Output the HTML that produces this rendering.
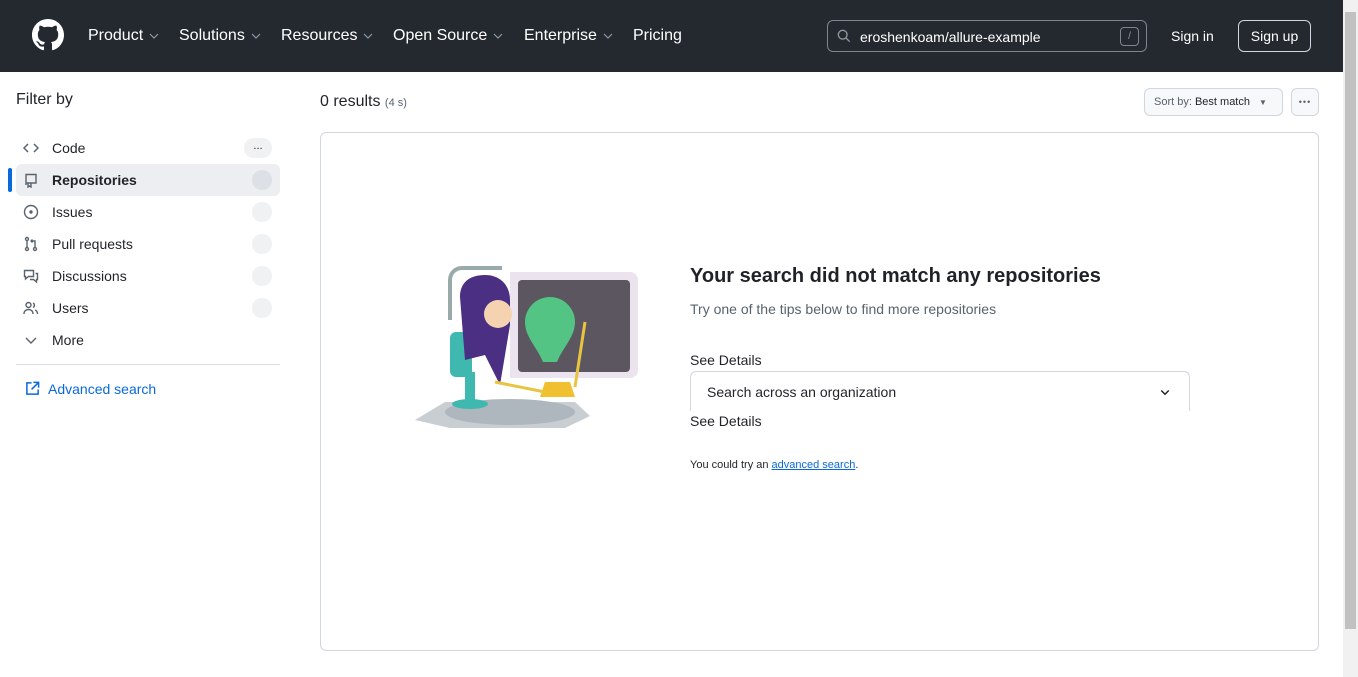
<!DOCTYPE html>
<html><head><meta charset="utf-8"><style>
*{box-sizing:border-box;margin:0;padding:0}
body{width:1358px;height:677px;overflow:hidden;font-family:"Liberation Sans",sans-serif;background:#fff;color:#1f2328;position:relative}
.hdr{position:absolute;left:0;top:0;width:1343px;height:72px;background:#24292f}
.nav{position:absolute;top:27px;color:#fff;font-size:16px;}
.nav svg{margin-left:6px;vertical-align:1px}
.search{position:absolute;left:827px;top:20px;width:320px;height:32px;border:1px solid #7d8590;border-radius:6px;color:#fff;font-size:14px}
.abs{position:absolute}
.side{position:absolute;left:16px;width:264px;height:32px;font-size:14px;}
.side .t{position:absolute;left:36px;top:8px}
.side svg{position:absolute;left:7px;top:8px}
.cnt{position:absolute;right:8px;top:6px;width:20px;height:20px;border-radius:10px;background:#eff1f3}
.sb{position:absolute;left:1343px;top:0;width:15px;height:677px;background:#f1f1f1}
</style></head><body>
<div class="hdr">
<svg class="abs" style="left:32px;top:19px" width="32" height="32" viewBox="0 0 16 16"><path fill="#fff" d="M8 0C3.58 0 0 3.580 0 8c0 3.54 2.29 6.53 5.47 7.590.4.07.55-.17.55-.38 0-.19-.01-.82-.01-1.49-2.010.37-2.53-.49-2.69-.94-.09-.23-.48-.94-.82-1.130-.28-.15-.68-.52-.01-.53.63-.01 1.080.58 1.230.82.72 1.210 1.870.87 2.330.66.07-.52.28-.87.51-1.07-1.78-.2-3.64-.89-3.64-3.95 0-.87.31-1.59.82-2.15-.08-.2-.36-1.020.08-2.12 0 0 .67-.21 2.2.82.64-.18 1.32-.27 2-.27.68 0 1.36.09 2 .27 1.53-1.04 2.2-.82 2.2-.82.44 1.1.16 1.92.08 2.12.51.56.82 1.27.82 2.15 0 3.07-1.87 3.75-3.65 3.950.29.25.54.73.54 1.48 0 1.07-.01 1.93-.01 2.2 0 .21.15.46.55.38A8.013 8.013 0 0016 8c0-4.42-3.58-8-8-8z"/></svg>
<div class="nav" style="left:88px">Product<svg width="10" height="6" viewBox="0 0 10 6" fill="none" stroke="#9198a1" stroke-width="1.2"><path d="M1 1l4 4 4-4"/></svg></div>
<div class="nav" style="left:179px">Solutions<svg width="10" height="6" viewBox="0 0 10 6" fill="none" stroke="#9198a1" stroke-width="1.2"><path d="M1 1l4 4 4-4"/></svg></div>
<div class="nav" style="left:281px">Resources<svg width="10" height="6" viewBox="0 0 10 6" fill="none" stroke="#9198a1" stroke-width="1.2"><path d="M1 1l4 4 4-4"/></svg></div>
<div class="nav" style="left:393px">Open Source<svg width="10" height="6" viewBox="0 0 10 6" fill="none" stroke="#9198a1" stroke-width="1.2"><path d="M1 1l4 4 4-4"/></svg></div>
<div class="nav" style="left:524px">Enterprise<svg width="10" height="6" viewBox="0 0 10 6" fill="none" stroke="#9198a1" stroke-width="1.2"><path d="M1 1l4 4 4-4"/></svg></div>
<div class="nav" style="left:633px">Pricing</div>
<div class="search">
<svg class="abs" style="left:9px;top:8px" width="14" height="14" viewBox="0 0 16 16"><circle cx="6.5" cy="6.5" r="5" fill="none" stroke="#9198a1" stroke-width="1.5"/><path d="M10 10l4.5 4.5" stroke="#9198a1" stroke-width="1.5"/></svg>
<span class="abs" style="left:32px;top:8px">eroshenkoam/allure-example</span>
<span class="abs" style="left:292px;top:6px;width:19px;height:19px;border:1px solid #7d8590;border-radius:4px;font-size:10px;color:#9198a1;text-align:center;line-height:17px">/</span>
</div>
<div class="nav" style="left:1171px;top:28px;font-size:14px">Sign in</div>
<div class="abs" style="left:1238px;top:20px;width:73px;height:32px;border:1px solid #d0d7de;border-radius:6px;color:#fff;font-size:14px;text-align:center;line-height:30px">Sign up</div>
</div>
<div class="abs" style="left:16px;top:91px;font-size:16px">Filter by</div>
<div class="side" style="top:132px"><svg width="16" height="16" viewBox="0 0 16 16" fill="none" stroke="#59636e" stroke-width="1.5"><path d="M5 4L1 8l4 4M11 4l4 4-4 4"/></svg><span class="t">Code</span><div class="cnt" style="width:28px;right:8px;font-size:11px;text-align:center;line-height:16px">...</div></div>
<div class="abs" style="left:8px;top:168px;width:4px;height:24px;border-radius:2px;background:#0969da"></div>
<div class="side" style="top:164px;background:#eceef1;border-radius:6px;font-weight:bold"><svg width="16" height="16" viewBox="0 0 16 16" fill="none" stroke="#59636e" stroke-width="1.4"><path d="M3 13V2.5h10V11H3.5M5 11v4l1.5-1 1.5 1v-4"/></svg><span class="t">Repositories</span><div class="cnt" style="background:#dde0e4"></div></div>
<div class="side" style="top:196px"><svg width="16" height="16" viewBox="0 0 16 16" fill="none" stroke="#59636e" stroke-width="1.4"><circle cx="8" cy="8" r="6.5"/><circle cx="8" cy="8" r="1" fill="#59636e"/></svg><span class="t">Issues</span><div class="cnt"></div></div>
<div class="side" style="top:228px"><svg width="16" height="16" viewBox="0 0 16 16" fill="none" stroke="#59636e" stroke-width="1.4"><circle cx="4" cy="3" r="1.5"/><circle cx="4" cy="13" r="1.5"/><circle cx="12" cy="13" r="1.5"/><path d="M4 4.5v7M12 11.5V5H8M9.5 3.5L8 5l1.5 1.5"/></svg><span class="t">Pull requests</span><div class="cnt"></div></div>
<div class="side" style="top:260px"><svg width="16" height="16" viewBox="0 0 16 16" fill="none" stroke="#59636e" stroke-width="1.4"><path d="M1.5 2.5h9v6h-5l-3 2.5v-2.5h-1zM12.5 5.5h2v6h-1v2.5l-3-2.5H7"/></svg><span class="t">Discussions</span><div class="cnt"></div></div>
<div class="side" style="top:292px"><svg width="16" height="16" viewBox="0 0 16 16" fill="none" stroke="#59636e" stroke-width="1.4"><circle cx="5.5" cy="5" r="2.5"/><path d="M1 14c0-3 2-4.5 4.5-4.5S10 11 10 14M10 3a2.5 2.5 0 010 4.5M12 10c1.5.5 2.5 2 2.5 4"/></svg><span class="t">Users</span><div class="cnt"></div></div>
<div class="side" style="top:324px"><svg width="16" height="16" viewBox="0 0 16 16" fill="none" stroke="#59636e" stroke-width="1.4"><path d="M3 6l5 5 5-5"/></svg><span class="t">More</span></div>
<div class="abs" style="left:16px;top:364px;width:264px;height:1px;background:#d8dee4"></div>
<svg class="abs" style="left:25px;top:381px" width="15" height="15" viewBox="0 0 16 16" fill="none" stroke="#0969da" stroke-width="1.6"><path d="M7 2H2v12h12V9M9 1.5h5.5V7M14.5 1.5L7 9"/></svg>
<div class="abs" style="left:48px;top:381px;font-size:14px;color:#0969da">Advanced search</div>

<div class="abs" style="left:320px;top:93px;font-size:16px">0 results <span style="font-size:11px;color:#59636e">(4 s)</span></div>
<div class="abs" style="left:1144px;top:88px;width:139px;height:28px;border:1px solid #d0d7de;border-radius:6px;background:#f6f8fa;font-size:11px;line-height:26px;padding-left:9px"><span style="color:#59636e">Sort by:</span> Best match <span style="font-size:8px;color:#59636e;margin-left:6px">▼</span></div>
<div class="abs" style="left:1291px;top:88px;width:28px;height:28px;border:1px solid #d0d7de;border-radius:6px;background:#f6f8fa;text-align:center;font-size:9px;line-height:26px;color:#59636e;letter-spacing:1px">•••</div>

<div class="abs" style="left:320px;top:132px;width:999px;height:519px;border:1px solid #d0d7de;border-radius:6px"></div>
<svg class="abs" style="left:410px;top:262px" width="230" height="172" viewBox="0 0 230 172">
<path d="M100 10h120a8 8 0 018 8v90a8 8 0 01-8 8H100z" fill="#ebe3ee"/>
<rect x="108" y="18" width="112" height="92" rx="4" fill="#5b5660"/>
<path d="M5 158l30-18h130l15 14-25 12H40z" fill="#c9ced3"/>
<ellipse cx="100" cy="150" rx="65" ry="13" fill="#aeb6be"/>
<path d="M40 58v-40a12 12 0 0112-12h40" fill="none" stroke="#9aa" stroke-width="4"/>
<rect x="40" y="70" width="22" height="45" rx="6" fill="#3fb8b0"/>
<rect x="55" y="110" width="10" height="32" fill="#3fb8b0"/>
<ellipse cx="60" cy="142" rx="18" ry="5" fill="#3fb8b0"/>
<path d="M50 35c0-15 10-22 25-22s25 10 25 25v25l-10 60-15-30-20 5z" fill="#4a2f82"/>
<circle cx="88" cy="52" r="14" fill="#f5d3b0"/>
<path d="M115 60a25 25 0 1150 0c0 15-12 25-18 40h-14c-6-15-18-25-18-40z" fill="#53e08f" opacity=".8"/>
<path d="M135 120h25l5 15h-35z" fill="#f0c030"/>
<path d="M85 120l50 10M175 60l-10 65" stroke="#e8c440" stroke-width="3"/>
</svg>
<div class="abs" style="left:690px;top:265px;font-size:20px;font-weight:bold">Your search did not match any repositories</div>
<div class="abs" style="left:690px;top:301px;font-size:14px;color:#59636e">Try one of the tips below to find more repositories</div>
<div class="abs" style="left:690px;top:352px;font-size:14px">See Details</div>
<div class="abs" style="left:690px;top:371px;width:500px;height:40px;border:1px solid #d0d7de;border-bottom:none;border-radius:6px 6px 0 0;font-size:14px;padding:12px 16px">Search across an organization
<svg class="abs" style="right:18px;top:14px" width="12" height="12" viewBox="0 0 16 16" fill="none" stroke="#1f2328" stroke-width="2"><path d="M3 6l5 5 5-5"/></svg></div>
<div class="abs" style="left:690px;top:413px;font-size:14px">See Details</div>
<div class="abs" style="left:690px;top:459px;font-size:11px">You could try an <span style="color:#0969da;text-decoration:underline">advanced search</span>.</div>
<div class="sb"><div class="abs" style="left:2px;top:12px;width:11px;height:617px;background:#c1c1c1"></div></div>
</body></html>
